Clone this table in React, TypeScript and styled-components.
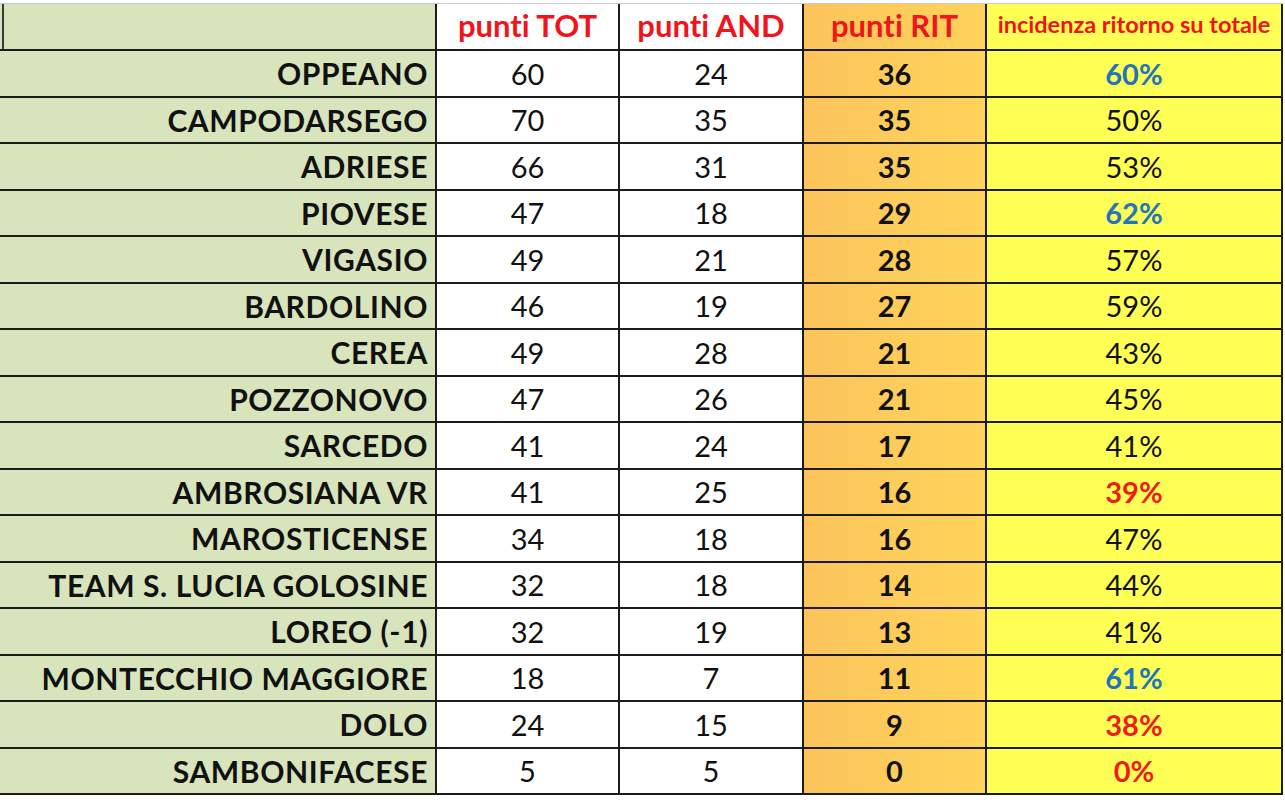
import React from "react";
import styled, { createGlobalStyle } from "styled-components";

type Tone = "plain" | "good" | "bad";

interface Team {
  name: string;
  tot: number;
  and: number;
  rit: number;
  pct: string;
  tone: Tone;
}

const teams: Team[] = [
  { name: "OPPEANO", tot: 60, and: 24, rit: 36, pct: "60%", tone: "good" },
  { name: "CAMPODARSEGO", tot: 70, and: 35, rit: 35, pct: "50%", tone: "plain" },
  { name: "ADRIESE", tot: 66, and: 31, rit: 35, pct: "53%", tone: "plain" },
  { name: "PIOVESE", tot: 47, and: 18, rit: 29, pct: "62%", tone: "good" },
  { name: "VIGASIO", tot: 49, and: 21, rit: 28, pct: "57%", tone: "plain" },
  { name: "BARDOLINO", tot: 46, and: 19, rit: 27, pct: "59%", tone: "plain" },
  { name: "CEREA", tot: 49, and: 28, rit: 21, pct: "43%", tone: "plain" },
  { name: "POZZONOVO", tot: 47, and: 26, rit: 21, pct: "45%", tone: "plain" },
  { name: "SARCEDO", tot: 41, and: 24, rit: 17, pct: "41%", tone: "plain" },
  { name: "AMBROSIANA VR", tot: 41, and: 25, rit: 16, pct: "39%", tone: "bad" },
  { name: "MAROSTICENSE", tot: 34, and: 18, rit: 16, pct: "47%", tone: "plain" },
  { name: "TEAM S. LUCIA GOLOSINE", tot: 32, and: 18, rit: 14, pct: "44%", tone: "plain" },
  { name: "LOREO (-1)", tot: 32, and: 19, rit: 13, pct: "41%", tone: "plain" },
  { name: "MONTECCHIO MAGGIORE", tot: 18, and: 7, rit: 11, pct: "61%", tone: "good" },
  { name: "DOLO", tot: 24, and: 15, rit: 9, pct: "38%", tone: "bad" },
  { name: "SAMBONIFACESE", tot: 5, and: 5, rit: 0, pct: "0%", tone: "bad" },
];

const toneColor: Record<Tone, string> = {
  plain: "#111111",
  good: "#2176b9",
  bad: "#ee1c1c",
};

const App = () => {
  return (
    <>
      <GlobalStyle />
      <Sheet>
        <CornerCell />
        <HeadCell>punti TOT</HeadCell>
        <HeadCell>punti AND</HeadCell>
        <HeadCell $rit>punti RIT</HeadCell>
        <HeadCell $small>incidenza ritorno su totale</HeadCell>

        {teams.map((t) => (
          <React.Fragment key={t.name}>
            <NameCell>{t.name}</NameCell>
            <NumCell>{t.tot}</NumCell>
            <NumCell>{t.and}</NumCell>
            <RitCell>{t.rit}</RitCell>
            <PctCell $tone={t.tone}>{t.pct}</PctCell>
          </React.Fragment>
        ))}
      </Sheet>
    </>
  );
};

const GlobalStyle = createGlobalStyle`
  body {
    margin: 0;
    background: #ffffff;
    font-family: Lato, "Open Sans", sans-serif;
    font-variant-ligatures: none;
  }
`;

const Sheet = styled.div`
  display: grid;
  grid-template-columns: 435px 181px 182px 181px 294px;
  grid-template-rows: 45px repeat(16, 44.5px);
  gap: 2px;
  width: max-content;
  margin-top: 3px;
  padding: 0 2px 2px 0;
  background: #1c1c1c;
  border-top: 1px solid #c3ccd8;
`;

const Cell = styled.div`
  display: flex;
  align-items: center;
  justify-content: center;
  font-size: 29px;
  line-height: 1;
  color: #111111;
  background: #ffffff;
`;

const NameCell = styled(Cell)`
  justify-content: flex-end;
  padding-right: 7px;
  background: #d8e4bc;
  font-weight: 700;
  font-size: 30px;
  letter-spacing: 0.6px;
  white-space: nowrap;
`;

const CornerCell = styled(NameCell)`
  box-shadow: inset 2px 0 0 #d8e4bc, inset 4px 0 0 #3a3a3a;
`;

const HeadCell = styled(Cell)<{ $rit?: boolean; $small?: boolean }>`
  color: #f0141c;
  font-weight: 700;
  font-size: ${(p) => (p.$small ? "23.5px" : "31px")};
  padding-bottom: 3px;
  white-space: nowrap;
  background: ${(p) =>
    p.$rit
      ? "linear-gradient(to right, #fbc45c, #ffd45a)"
      : p.$small
      ? "#ffff55"
      : "#ffffff"};
`;

const NumCell = styled(Cell)``;

const RitCell = styled(Cell)`
  font-weight: 700;
  background: linear-gradient(to right, #fbc45c, #ffd45a);
`;

const PctCell = styled(Cell)<{ $tone: Tone }>`
  background: #ffff55;
  color: ${(p) => toneColor[p.$tone]};
  font-weight: ${(p) => (p.$tone === "plain" ? 400 : 700)};
`;

export default App;
